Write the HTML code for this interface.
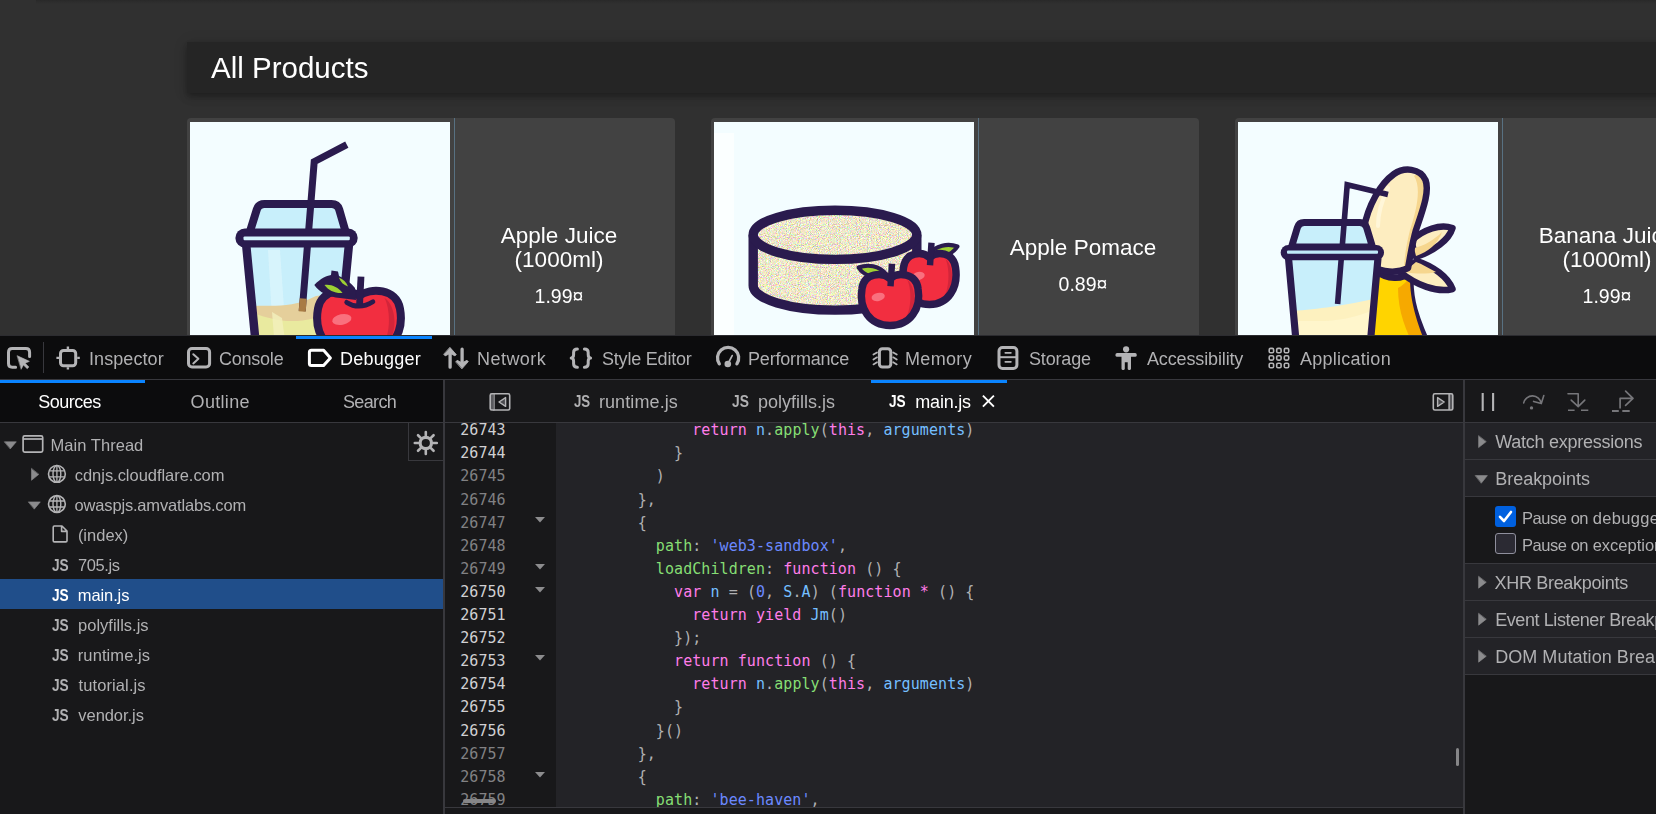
<!DOCTYPE html>
<html lang="en"><head><meta charset="utf-8"><title>OWASP Juice Shop</title>
<style>

html,body{margin:0;padding:0;overflow:hidden;background:#303030;}
body{width:1656px;height:814px;}
#root{position:relative;width:1656px;height:814px;overflow:hidden;background:#303030;font-family:"Liberation Sans", sans-serif;}
.a{position:absolute;}
.t{position:absolute;white-space:pre;line-height:1;}
svg{position:absolute;overflow:visible;}
.card{position:absolute;top:118px;width:488px;height:240px;background:#424242;border-radius:4px;}
.img{position:absolute;left:3px;top:4px;width:260px;height:230px;background:#f3fdff;overflow:hidden;}
.vl{position:absolute;left:267px;top:0;width:1px;height:240px;background:#587182;}
.mono{font-family:"DejaVu Sans Mono","Liberation Mono",monospace;}
.hl{position:absolute;height:1px;background:#38383d;}
.row{position:absolute;left:1465px;width:191px;height:36px;background:#232327;}

</style></head>
<body>
<div id="root">
<div class="a" style="left:36px;top:0;width:1620px;height:4px;background:linear-gradient(#292929,#2d2d2d 55%,#303030);"></div>
<div class="a" style="left:187px;top:42px;width:1500px;height:51px;background:#252525;box-shadow:0 3px 5px -1px rgba(0,0,0,.2),0 5px 8px rgba(0,0,0,.14),0 1px 14px rgba(0,0,0,.12);"></div>
<div class="card" style="left:187px;"><div class="img"><svg width="260" height="230" viewBox="0 0 260 230" style="left:0;top:0;"><defs><clipPath id="cupA"><path d="M56.2 125L66.5 230H148.6L158.9 125Z"/></clipPath></defs><path d="M56.2 125L66.5 230H148.6L158.9 125Z" fill="#c8effb"/><path d="M78 128L84 230H97L90 128Z" fill="#dbf5fd" opacity=".8"/><g clip-path="url(#cupA)"><path d="M50 186C75 180 95 190 126 174L170 168V240H50Z" fill="#e5cf9b"/><path d="M50 188C75 192 100 212 150 186V240H50Z" fill="#e9ea9f"/><path d="M82 190L86 240H98L92 196Z" fill="#f3f0bd" opacity=".8"/></g><path d="M59.5 111L66.8 87.5Q68.5 82 74.5 82H141.5Q147.5 82 149.2 87.5L156 111Z" fill="#c8effb" stroke="#2a1b4e" stroke-width="8" stroke-linejoin="round"/><path d="M156.8 22.6L124.2 39.6L112.2 189" fill="none" stroke="#2a1b4e" stroke-width="7" stroke-linejoin="miter"/><path d="M113.2 176.5L112.2 189.5" stroke="#a97b43" stroke-width="7"/><path d="M56.2 123L66.5 230M158.9 123L148.6 230" stroke="#2a1b4e" stroke-width="8.5"/><rect x="45.4" y="106.6" width="122.3" height="18.8" rx="9.4" fill="#2a1b4e"/><rect x="53.5" y="114.4" width="106.3" height="3.8" rx="1.2" fill="#d4f4fc"/><path d="M169 173.8C157.5 165.2 131.3 166.5 128.0 186.7C123.1 213.1 139.5 234.5 169 234.5C198.5 234.5 214.9 213.1 210.0 186.7C206.7 166.5 180.5 165.2 169 173.8Z" fill="#f22e40"/><path d="M194.4 175.8C207.9 185.0 210.0 218.0 187.4 231.9C201.8 216.3 201.0 188.3 194.4 175.8Z" fill="#d3253a"/><ellipse cx="151.8" cy="197.5" rx="9.8" ry="5.3" fill="#f9707e" transform="rotate(-12 151.8 197.5)"/><path d="M169 173.8C157.5 165.2 131.3 166.5 128.0 186.7C123.1 213.1 139.5 234.5 169 234.5C198.5 234.5 214.9 213.1 210.0 186.7C206.7 166.5 180.5 165.2 169 173.8Z" fill="none" stroke="#2a1b4e" stroke-width="8" stroke-linejoin="round"/><path d="M156.7 180.4Q169 188.3 182.9 179.7" fill="none" stroke="#2a1b4e" stroke-width="4.8" stroke-linecap="round"/><path d="M169.5 183.7L171.0 154.6" stroke="#2a1b4e" stroke-width="6.8"/><path d="M124.3 163C131 156 136 154 141 153L141.5 148.5L148 149.5L149 154C156 157 161 161 165 166L166 178L150 176C138 175 129 170 124.3 163Z" fill="#2a1b4e"/><path d="M134.5 163C141 162 148 165 152.5 171C145 171.5 138.5 168.5 134.5 163Z" fill="#9ed033"/><path d="M148.8 155.5C153 157 156.5 160 158 164.5C153.5 163 150.5 160 148.8 155.5Z" fill="#9ed033"/></svg></div><div class="vl"></div></div>
<div class="card" style="left:711px;"><div class="img"><svg width="260" height="230" viewBox="0 0 260 230" style="left:0;top:0;"><defs><filter id="nz" x="0" y="0" width="100%" height="100%" color-interpolation-filters="sRGB"><feTurbulence type="fractalNoise" baseFrequency="1.1" numOctaves="1" seed="3" result="n"/><feColorMatrix in="n" type="matrix" values="1.0 0 0 0 0.44  0 1.0 0 0 0.41  0 0 1.0 0 0.29  0 0 0 0 1"/><feComposite in2="SourceGraphic" operator="in"/></filter></defs><rect x="0" y="11" width="20" height="220" fill="#fbffff"/><path d="M39.2 112.8A81.8 24.6 0 0 1 202.8 112.8V163.5A81.8 24.6 0 0 1 39.2 163.5Z" fill="#ebe4c9"/><path d="M39.2 112.8A81.8 24.6 0 0 1 202.8 112.8V163.5A81.8 24.6 0 0 1 39.2 163.5Z" fill="#ebe4c9" filter="url(#nz)"/><path d="M39.2 112.8A81.8 24.6 0 0 1 202.8 112.8V163.5A81.8 24.6 0 0 1 39.2 163.5Z" fill="none" stroke="#2a1b4e" stroke-width="9.4" stroke-linejoin="round"/><path d="M39.2 112.8A81.8 24.6 0 0 0 202.8 112.8" fill="none" stroke="#2a1b4e" stroke-width="9.4"/><path d="M213.5 133C222 123 234 121 243.5 124.5C238 133 226 137.5 213.5 133Z" fill="#9ed033" stroke="#2a1b4e" stroke-width="4" stroke-linejoin="round"/><path d="M215.5 135.6C208.2 128.9 191.6 130.0 189.5 145.5C186.4 165.9 196.8 182.5 215.5 182.5C234.2 182.5 244.6 165.9 241.5 145.5C239.4 130.0 222.8 128.9 215.5 135.6Z" fill="#f22e40"/><path d="M231.6 137.1C240.2 144.2 241.5 169.8 227.2 180.5C236.3 168.5 235.8 146.8 231.6 137.1Z" fill="#d3253a"/><ellipse cx="204.6" cy="153.9" rx="6.2" ry="4.1" fill="#f9707e" transform="rotate(-12 204.6 153.9)"/><path d="M215.5 135.6C208.2 128.9 191.6 130.0 189.5 145.5C186.4 165.9 196.8 182.5 215.5 182.5C234.2 182.5 244.6 165.9 241.5 145.5C239.4 130.0 222.8 128.9 215.5 135.6Z" fill="none" stroke="#2a1b4e" stroke-width="7.5" stroke-linejoin="round"/><path d="M216.0 143.2L217.5 120.8" stroke="#2a1b4e" stroke-width="6.4"/><path d="M172 152C165 143.5 154 142 144.5 145.5C150 154 161 157.5 172 152Z" fill="#9ed033" stroke="#2a1b4e" stroke-width="4" stroke-linejoin="round"/><path d="M176 156.6C168.2 149.9 150.2 151.0 148.0 166.5C144.6 186.9 155.8 203.5 176 203.5C196.2 203.5 207.4 186.9 204.0 166.5C201.8 151.0 183.8 149.9 176 156.6Z" fill="#f22e40"/><path d="M193.4 158.1C202.6 165.2 204.0 190.8 188.6 201.5C198.4 189.5 197.8 167.8 193.4 158.1Z" fill="#d3253a"/><ellipse cx="164.2" cy="174.9" rx="6.7" ry="4.1" fill="#f9707e" transform="rotate(-12 164.2 174.9)"/><path d="M176 156.6C168.2 149.9 150.2 151.0 148.0 166.5C144.6 186.9 155.8 203.5 176 203.5C196.2 203.5 207.4 186.9 204.0 166.5C201.8 151.0 183.8 149.9 176 156.6Z" fill="none" stroke="#2a1b4e" stroke-width="7.5" stroke-linejoin="round"/><path d="M176.5 164.2L178.0 141.8" stroke="#2a1b4e" stroke-width="6.4"/></svg></div><div class="vl"></div></div>
<div class="card" style="left:1235px;"><div class="img"><svg width="260" height="230" viewBox="0 0 260 230" style="left:0;top:0;"><defs><clipPath id="cupB"><path d="M50.5 136L59 230H131.5L140 136Z"/></clipPath></defs><path d="M136 148C150 158 164 158 173 150C170 175 178 198 194 232H128Z" fill="#ffd400" stroke="#2a1b4e" stroke-width="6.5" stroke-linejoin="round"/><path d="M160 166C160 190 168 210 180 232H192C178 200 172 178 172 156C168 160 164 164 160 166Z" fill="#f6a900"/><path d="M173 119C186 107 202 102 214.5 106C211 118 196 129 178 135Z" fill="#fdedc0" stroke="#2a1b4e" stroke-width="6.5" stroke-linejoin="round"/><path d="M176 126C186 124 196 118 204 110C200 122 190 130 178 134Z" fill="#f6d68e"/><path d="M179 139C195 144 210 155 214.5 167C199 171 178 163 162 150Z" fill="#fdedc0" stroke="#2a1b4e" stroke-width="6.5" stroke-linejoin="round"/><path d="M166 150C178 152 190 152 198 150C190 146 184 142 178 140Z" fill="#f6d68e"/><path d="M126 106C130 84 142 62 156 52C166 45 182 46 187.5 58C192 70 184 90 178 108C174 122 172 136 170 146C158 152 144 150 134 144Z" fill="#fdedc0"/><path d="M176 54C184 66 178 90 172 108C168 124 166 138 166 148L170 146C172 136 174 122 178 108C184 90 192 70 187.5 58C185 53 181 51 176 54Z" fill="#f6d68e"/><path d="M150 66C144 78 140 92 140 104" stroke="#fff6d8" stroke-width="4" fill="none" stroke-linecap="round"/><path d="M126 106C130 84 142 62 156 52C166 45 182 46 187.5 58C192 70 184 90 178 108C174 122 172 136 170 146C158 152 144 150 134 144Z" fill="none" stroke="#2a1b4e" stroke-width="6.5" stroke-linejoin="round"/><path d="M50.5 136L59 230H131.5L140 136Z" fill="#c8effb"/><g clip-path="url(#cupB)"><path d="M40 190C70 188 95 186 135 177V240H40Z" fill="#fdf1bf"/><path d="M40 200C70 196 95 206 140 186V240H40Z" fill="#fff8d2" opacity=".7"/></g><path d="M53.5 125L59.4 105.5Q60.9 100.5 66.1 100.5H121.9Q127.1 100.5 128.6 105.5L134.5 125Z" fill="#c8effb" stroke="#2a1b4e" stroke-width="7" stroke-linejoin="round"/><path d="M150 72.5L109.2 62.8L99.6 182" fill="none" stroke="#2a1b4e" stroke-width="5.6"/><path d="M50.5 136L59 230M140 136L131.5 230" stroke="#2a1b4e" stroke-width="7.2"/><rect x="42.7" y="123" width="103.3" height="15.2" rx="7.6" fill="#2a1b4e"/><rect x="49" y="128.6" width="91" height="3.2" rx="1" fill="#bfeaf9"/></svg></div><div class="vl"></div></div>
<div class="a" id="dt" style="left:0;top:335px;width:1656px;height:479px;background:#18181a;"></div>
<div class="a" style="left:0;top:335px;width:1656px;height:1px;background:#2c2c30;"></div>
<div class="a" style="left:0;top:336px;width:1656px;height:43px;background:#0c0c0d;"></div>
<div class="hl" style="left:0;top:379px;width:1656px;"></div>
<div class="a" style="left:296px;top:336px;width:136px;height:3px;background:#0a84ff;"></div>
<div class="a" style="left:43px;top:342px;width:1px;height:31px;background:#38383d;"></div>
<div class="a" style="left:0;top:380px;width:443px;height:42px;background:#0c0c0d;"></div>
<div class="a" style="left:0;top:380px;width:145px;height:3px;background:#0a84ff;"></div>
<div class="hl" style="left:0;top:422px;width:1656px;"></div>
<div class="a" style="left:0;top:579px;width:443px;height:30px;background:#204e8a;"></div>
<div class="a" style="left:408px;top:423px;width:35px;height:38px;background:#18181a;border-left:1px solid #38383d;border-bottom:1px solid #38383d;box-sizing:border-box;"></div>
<div class="a" style="left:443px;top:380px;width:2px;height:434px;background:#38383d;"></div>
<div class="a" style="left:1463px;top:380px;width:2px;height:434px;background:#38383d;"></div>
<div class="a" style="left:556px;top:423px;width:907px;height:384px;background:#232327;"></div>
<div class="hl" style="left:445px;top:807px;width:1018px;"></div>
<div class="a" style="left:871px;top:380px;width:136px;height:3px;background:#0a84ff;"></div>
<div class="a mono" id="code" style="left:445px;top:423px;width:1018px;height:384px;overflow:hidden;font-size:15px;letter-spacing:0.070px;">
<span class="t" style="left:15.20px;top:0.41px;color:#d0d0d3;">26743</span>
<span class="t" style="left:247.25px;top:0.41px;color:#b1b1b3;"><span style="color:#ff7de9">return</span> <span style="color:#75bfff">n</span>.<span style="color:#86de74">apply</span>(<span style="color:#ff7de9">this</span>, <span style="color:#75bfff">arguments</span>)</span>
<span class="t" style="left:15.20px;top:22.54px;color:#d0d0d3;">26744</span>
<span class="t" style="left:229.05px;top:22.54px;color:#b1b1b3;">}</span>
<span class="t" style="left:15.20px;top:45.66px;color:#818184;">26745</span>
<span class="t" style="left:210.85px;top:45.66px;color:#b1b1b3;">)</span>
<span class="t" style="left:15.20px;top:69.79px;color:#818184;">26746</span>
<span class="t" style="left:192.65px;top:69.79px;color:#b1b1b3;">},</span>
<span class="t" style="left:15.20px;top:92.91px;color:#818184;">26747</span>
<span class="t" style="left:192.65px;top:92.91px;color:#b1b1b3;">{</span>
<svg style="left:90px;top:94.40px;" width="10" height="6" viewBox="0 0 10 6"><path d="M0 0h10l-5 5.6z" fill="#8c8c8e"/></svg>
<span class="t" style="left:15.20px;top:116.03px;color:#818184;">26748</span>
<span class="t" style="left:210.85px;top:116.03px;color:#b1b1b3;"><span style="color:#86de74">path</span>: <span style="color:#6b89ff">'web3-sandbox'</span>,</span>
<span class="t" style="left:15.20px;top:139.16px;color:#818184;">26749</span>
<span class="t" style="left:210.85px;top:139.16px;color:#b1b1b3;"><span style="color:#86de74">loadChildren</span>: <span style="color:#ff7de9">function</span> () {</span>
<svg style="left:90px;top:140.65px;" width="10" height="6" viewBox="0 0 10 6"><path d="M0 0h10l-5 5.6z" fill="#8c8c8e"/></svg>
<span class="t" style="left:15.20px;top:162.28px;color:#d0d0d3;">26750</span>
<span class="t" style="left:229.05px;top:162.28px;color:#b1b1b3;"><span style="color:#ff7de9">var</span> <span style="color:#75bfff">n</span> = (<span style="color:#6b89ff">0</span>, <span style="color:#75bfff">S</span>.<span style="color:#75bfff">A</span>) (<span style="color:#ff7de9">function</span> <span style="color:#ff7de9">*</span> () {</span>
<svg style="left:90px;top:163.77px;" width="10" height="6" viewBox="0 0 10 6"><path d="M0 0h10l-5 5.6z" fill="#8c8c8e"/></svg>
<span class="t" style="left:15.20px;top:185.41px;color:#d0d0d3;">26751</span>
<span class="t" style="left:247.25px;top:185.41px;color:#b1b1b3;"><span style="color:#ff7de9">return</span> <span style="color:#ff7de9">yield</span> <span style="color:#75bfff">Jm</span>()</span>
<span class="t" style="left:15.20px;top:207.53px;color:#d0d0d3;">26752</span>
<span class="t" style="left:229.05px;top:207.53px;color:#b1b1b3;">});</span>
<span class="t" style="left:15.20px;top:230.66px;color:#d0d0d3;">26753</span>
<span class="t" style="left:229.05px;top:230.66px;color:#b1b1b3;"><span style="color:#ff7de9">return</span> <span style="color:#ff7de9">function</span> () {</span>
<svg style="left:90px;top:232.15px;" width="10" height="6" viewBox="0 0 10 6"><path d="M0 0h10l-5 5.6z" fill="#8c8c8e"/></svg>
<span class="t" style="left:15.20px;top:253.78px;color:#d0d0d3;">26754</span>
<span class="t" style="left:247.25px;top:253.78px;color:#b1b1b3;"><span style="color:#ff7de9">return</span> <span style="color:#75bfff">n</span>.<span style="color:#86de74">apply</span>(<span style="color:#ff7de9">this</span>, <span style="color:#75bfff">arguments</span>)</span>
<span class="t" style="left:15.20px;top:276.91px;color:#d0d0d3;">26755</span>
<span class="t" style="left:229.05px;top:276.91px;color:#b1b1b3;">}</span>
<span class="t" style="left:15.20px;top:301.03px;color:#d0d0d3;">26756</span>
<span class="t" style="left:210.85px;top:301.03px;color:#b1b1b3;">}()</span>
<span class="t" style="left:15.20px;top:324.16px;color:#818184;">26757</span>
<span class="t" style="left:192.65px;top:324.16px;color:#b1b1b3;">},</span>
<span class="t" style="left:15.20px;top:347.28px;color:#818184;">26758</span>
<span class="t" style="left:192.65px;top:347.28px;color:#b1b1b3;">{</span>
<svg style="left:90px;top:348.77px;" width="10" height="6" viewBox="0 0 10 6"><path d="M0 0h10l-5 5.6z" fill="#8c8c8e"/></svg>
<span class="t" style="left:15.20px;top:370.41px;color:#818184;">26759</span>
<span class="t" style="left:210.85px;top:370.41px;color:#b1b1b3;"><span style="color:#86de74">path</span>: <span style="color:#6b89ff">'bee-haven'</span>,</span>
</div>
<div class="a" style="left:463px;top:799px;width:33px;height:4px;border-radius:2px;background:#868688;"></div>
<div class="a" style="left:1456px;top:748px;width:3px;height:18px;border-radius:1.5px;background:#868688;"></div>
<div class="row" style="top:423px;"></div>
<div class="row" style="top:460px;"></div>
<div class="row" style="top:564px;"></div>
<div class="row" style="top:601px;"></div>
<div class="row" style="top:638px;"></div>
<div class="hl" style="left:1465px;top:459px;width:191px;"></div>
<div class="hl" style="left:1465px;top:496px;width:191px;"></div>
<div class="hl" style="left:1465px;top:563px;width:191px;"></div>
<div class="hl" style="left:1465px;top:600px;width:191px;"></div>
<div class="hl" style="left:1465px;top:637px;width:191px;"></div>
<div class="hl" style="left:1465px;top:674px;width:191px;"></div>
<div class="a" style="left:1495px;top:506px;width:21px;height:21px;border-radius:3px;background:#0060df;"></div>
<svg style="left:1495px;top:506px;" width="21" height="21" viewBox="0 0 21 21"><path d="M5 10.8l4 4.2 7-9" fill="none" stroke="#fff" stroke-width="2.6" stroke-linecap="round" stroke-linejoin="round"/></svg>
<div class="a" style="left:1495px;top:533px;width:21px;height:21px;border-radius:3px;background:#2b2a33;border:1px solid #8f8f9d;box-sizing:border-box;"></div>
<div class="t" id="allp" style="will-change:transform;left:211px;top:53.23px;font-size:29.5px;color:#fff;">All Products</div>
<div class="t" style="will-change:transform;left:409px;width:300px;text-align:center;top:224.95px;font-size:22.5px;color:#fff;">Apple Juice</div><div class="t" style="will-change:transform;left:409px;width:300px;text-align:center;top:249.25px;font-size:22.5px;color:#fff;">(1000ml)</div><div class="t" style="will-change:transform;left:409px;width:300px;text-align:center;top:287.39px;font-size:19.5px;color:#fff;">1.99&curren;</div>
<div class="t" style="will-change:transform;left:933px;width:300px;text-align:center;top:237.05px;font-size:22.5px;color:#fff;">Apple Pomace</div><div class="t" style="will-change:transform;left:933px;width:300px;text-align:center;top:275.29px;font-size:19.5px;color:#fff;">0.89&curren;</div>
<div class="t" style="will-change:transform;left:1457px;width:300px;text-align:center;top:224.95px;font-size:22.5px;color:#fff;">Banana Juice</div><div class="t" style="will-change:transform;left:1457px;width:300px;text-align:center;top:249.25px;font-size:22.5px;color:#fff;">(1000ml)</div><div class="t" style="will-change:transform;left:1457px;width:300px;text-align:center;top:287.39px;font-size:19.5px;color:#fff;">1.99&curren;</div>
<svg style="left:0;top:0;" width="1656" height="814" viewBox="0 0 1656 814" fill="none" stroke-linecap="round" stroke-linejoin="round">
<path d="M15.6 367.3H12.2Q8.5 367.3 8.5 363.6V352.2Q8.5 348.5 12.2 348.5H25.9Q29.6 348.5 29.6 352.2V356.6" stroke="#b4b4b6" stroke-width="3"/>
<path d="M17.4 355.8L29.4 361.3L25.2 363.3L28.9 367L27.2 368.7L23.4 365L21.3 369Z" fill="#b4b4b6" stroke="#b4b4b6" stroke-width="0.6"/>
<rect x="60.5" y="350.5" width="15.2" height="15.2" rx="3" stroke="#b4b4b6" stroke-width="3"/>
<path d="M67.9 346.6V349M67.9 367.2V369.4M56.4 357.9H59M77.2 357.9H79.8" stroke="#b4b4b6" stroke-width="2.4" stroke-linecap="butt"/>
<rect x="188.5" y="348.5" width="21.1" height="18.5" rx="3.5" stroke="#b4b4b6" stroke-width="3"/>
<path d="M193.3 354.2L198.4 358.8L193.3 363.4" stroke="#b4b4b6" stroke-width="2"/>
<path d="M311.4 350.2H323.6L330.4 357.9L323.6 365.6H311.4Q309.4 365.6 309.4 363.6V352.2Q309.4 350.2 311.4 350.2Z" stroke="#fff" stroke-width="3"/>
<path d="M450.1 351V367.2M462.1 349.2V364" stroke="#b4b4b6" stroke-width="3.3"/>
<path d="M450.1 347.6L456.3 354.6L455 355.9L450.1 353.4L445.2 355.9L443.9 354.6Z" fill="#b4b4b6" stroke="#b4b4b6" stroke-width="0.8"/>
<path d="M462.1 368.6L468.3 361.6L467 360.3L462.1 362.8L457.2 360.3L455.9 361.6Z" fill="#b4b4b6" stroke="#b4b4b6" stroke-width="0.8"/>
<path d="M577.4 348.9Q573.6 348.9 573.6 352.4V354.6Q573.6 357.9 571.2 357.9Q573.6 357.9 573.6 361.2V363.8Q573.6 367.3 577.4 367.3" stroke="#b4b4b6" stroke-width="3"/>
<path d="M584.4 348.9Q588.2 348.9 588.2 352.4V354.6Q588.2 357.9 590.6 357.9Q588.2 357.9 588.2 361.2V363.8Q588.2 367.3 584.4 367.3" stroke="#b4b4b6" stroke-width="3"/>
<path d="M719.31 363.83A10.6 10.6 0 1 1 736.89 363.83" stroke="#b4b4b6" stroke-width="3.3"/>
<circle cx="727.8" cy="364" r="3.3" fill="#b4b4b6"/><path d="M727.8 364L732.2 355.6" stroke="#b4b4b6" stroke-width="1.7"/>
<rect x="879.4" y="348.8" width="11.4" height="18.2" rx="3" stroke="#b4b4b6" stroke-width="3"/>
<path d="M877 352.4L873.4 354.6M893.2 352.4L896.8 354.6" stroke="#b4b4b6" stroke-width="1.7"/>
<path d="M877 357.3L873.4 359.5M893.2 357.3L896.8 359.5" stroke="#b4b4b6" stroke-width="1.7"/>
<path d="M877 362.2L873.4 364.4M893.2 362.2L896.8 364.4" stroke="#b4b4b6" stroke-width="1.7"/>
<rect x="999" y="347.5" width="17.9" height="20.9" rx="3.5" stroke="#b4b4b6" stroke-width="3"/>
<path d="M999 357.2H1016.9" stroke="#b4b4b6" stroke-width="2" stroke-linecap="butt"/><path d="M1005.3 352.8H1010.9M1005.3 361.8H1010.9" stroke="#b4b4b6" stroke-width="1.7"/>
<circle cx="1126.1" cy="349.3" r="3.1" fill="#b4b4b6"/>
<rect x="1115.5" y="353" width="21.2" height="3.8" rx="1.6" fill="#b4b4b6"/>
<path d="M1121.5 354.5H1131V368.8Q1131 369.9 1129.9 369.9H1128.8Q1127.7 369.9 1127.7 368.8V362.3H1124.8V368.8Q1124.8 369.9 1123.7 369.9H1122.6Q1121.5 369.9 1121.5 368.8Z" fill="#b4b4b6"/>
<rect x="1269.2" y="348.4" width="4.4" height="4.4" rx="1.3" stroke="#b4b4b6" stroke-width="1.6"/>
<rect x="1269.2" y="355.7" width="4.4" height="4.4" rx="1.3" stroke="#b4b4b6" stroke-width="1.6"/>
<rect x="1269.2" y="363.3" width="4.4" height="4.4" rx="1.3" stroke="#b4b4b6" stroke-width="1.6"/>
<rect x="1276.7" y="348.4" width="4.4" height="4.4" rx="1.3" stroke="#b4b4b6" stroke-width="1.6"/>
<rect x="1276.7" y="355.7" width="4.4" height="4.4" rx="1.3" stroke="#b4b4b6" stroke-width="1.6"/>
<rect x="1276.7" y="363.3" width="4.4" height="4.4" rx="1.3" stroke="#b4b4b6" stroke-width="1.6"/>
<rect x="1284.3" y="348.4" width="4.4" height="4.4" rx="1.3" stroke="#b4b4b6" stroke-width="1.6"/>
<rect x="1284.3" y="355.7" width="4.4" height="4.4" rx="1.3" stroke="#b4b4b6" stroke-width="1.6"/>
<rect x="1284.3" y="363.3" width="4.4" height="4.4" rx="1.3" stroke="#b4b4b6" stroke-width="1.6"/>
<path d="M4.6 441.8H16.3L10.45 448.7Z" fill="#8b8b8d" stroke="#8b8b8d" stroke-width="0.6"/>
<rect x="23.1" y="435.9" width="19.6" height="16.3" rx="1.6" stroke="#b4b4b6" stroke-width="1.7"/><path d="M23.1 439H42.7" stroke="#b4b4b6" stroke-width="1.7" stroke-linecap="butt"/>
<path d="M31.5 468.7V480.3L38.6 474.5Z" fill="#8b8b8d" stroke="#8b8b8d" stroke-width="0.6"/>
<path d="M28.6 501.9H40.3L34.45 508.9Z" fill="#8b8b8d" stroke="#8b8b8d" stroke-width="0.6"/>
<circle cx="56.9" cy="473.9" r="8.4" stroke="#b4b4b6" stroke-width="1.6"/><ellipse cx="56.9" cy="473.9" rx="3.9" ry="8.4" stroke="#b4b4b6" stroke-width="1.4"/><path d="M56.9 465.5V482.29999999999995M49.1 470.9H64.7M49.1 476.9H64.7" stroke="#b4b4b6" stroke-width="1.3" stroke-linecap="butt"/>
<circle cx="56.9" cy="504.0" r="8.4" stroke="#b4b4b6" stroke-width="1.6"/><ellipse cx="56.9" cy="504.0" rx="3.9" ry="8.4" stroke="#b4b4b6" stroke-width="1.4"/><path d="M56.9 495.6V512.4M49.1 501.0H64.7M49.1 507.0H64.7" stroke="#b4b4b6" stroke-width="1.3" stroke-linecap="butt"/>
<path d="M53.2 527.2Q53.2 526 54.4 526H62L67 531V540.7Q67 541.9 65.8 541.9H54.4Q53.2 541.9 53.2 540.7ZM61.6 526.2V531.4H66.8" stroke="#b4b4b6" stroke-width="1.6"/>
<circle cx="425.8" cy="443.0" r="5.7" stroke="#b4b4b6" stroke-width="3.2"/>
<path d="M433.00 443.00L436.80 443.00M430.89 448.09L433.58 450.78M425.80 450.20L425.80 454.00M420.71 448.09L418.02 450.78M418.60 443.00L414.80 443.00M420.71 437.91L418.02 435.22M425.80 435.80L425.80 432.00M430.89 437.91L433.58 435.22" stroke="#b4b4b6" stroke-width="2.6"/>
<rect x="493.8" y="393.8" width="0.1" height="16.2" stroke="#b4b4b6" stroke-width="1.5"/><rect x="490.2" y="393.8" width="3.6" height="16.2" fill="#5a5a5e"/>
<rect x="490.2" y="393.8" width="19.5" height="16.2" rx="1.6" stroke="#b4b4b6" stroke-width="1.6"/>
<path d="M505.6 397.6V406.4L499 402Z" stroke="#b4b4b6" stroke-width="1.4" fill="#4a4a4e"/>
<rect x="1449.2" y="393.8" width="3.6" height="16.2" fill="#5a5a5e"/><path d="M1449.1 393.8V410" stroke="#b4b4b6" stroke-width="1.5" stroke-linecap="butt"/>
<rect x="1433.3" y="393.8" width="19.5" height="16.2" rx="1.6" stroke="#b4b4b6" stroke-width="1.6"/>
<path d="M1437.6 397.6V406.4L1444.2 402Z" stroke="#b4b4b6" stroke-width="1.4" fill="#4a4a4e"/>
<path d="M982.9 395.6L993.9 406.6M993.9 395.6L982.9 406.6" stroke="#fff" stroke-width="1.9" stroke-linecap="butt"/>
<path d="M1482.7 393V411M1493.1 393V411" stroke="#b4b4b6" stroke-width="2.1" stroke-linecap="butt"/>
<path d="M1523.7 402.9A8.9 8.9 0 0 1 1541.2 403.4M1543.8 395.6L1541.3 403.6L1533.6 401.4" stroke="#76767a" stroke-width="1.6"/><circle cx="1531.5" cy="407.9" r="1.7" fill="#76767a"/>
<path d="M1568 393.7H1578.2V406.4M1571.2 400.1L1578.2 406.6L1584.8 400.1" stroke="#76767a" stroke-width="1.6"/><path d="M1568 410.2H1574.6M1581 410.2H1588.3" stroke="#76767a" stroke-width="1.6" stroke-linecap="butt"/>
<path d="M1620.1 407.8V398.4H1632.8M1625.6 391.2L1633 398.4L1625.6 405.4" stroke="#76767a" stroke-width="1.7"/><path d="M1612 410.9H1618.8M1622.3 410.9H1629.7" stroke="#76767a" stroke-width="2" stroke-linecap="butt"/>
<path d="M1478.6 436.0V447.6L1486 441.8Z" fill="#8b8b8d" stroke="#8b8b8d" stroke-width="0.6"/>
<path d="M1478.6 576.6V588.2L1486 582.4Z" fill="#8b8b8d" stroke="#8b8b8d" stroke-width="0.6"/>
<path d="M1478.6 613.6V625.2L1486 619.4Z" fill="#8b8b8d" stroke="#8b8b8d" stroke-width="0.6"/>
<path d="M1478.6 650.6V662.2L1486 656.4Z" fill="#8b8b8d" stroke="#8b8b8d" stroke-width="0.6"/>
<path d="M1475.5 475.6H1487.4L1481.45 483Z" fill="#8b8b8d" stroke="#8b8b8d" stroke-width="0.6"/>
</svg>
<span class="t" id="tb1" style="left:88.86px;top:349.96px;font-size:18px;color:#b1b1b3;letter-spacing:0.080px;will-change:transform;">Inspector</span>
<span class="t" id="tb2" style="left:219.10px;top:349.96px;font-size:18px;color:#b1b1b3;letter-spacing:-0.234px;will-change:transform;">Console</span>
<span class="t" id="tb3" style="left:339.80px;top:349.96px;font-size:18px;color:#ffffff;letter-spacing:0.246px;will-change:transform;">Debugger</span>
<span class="t" id="tb4" style="left:476.83px;top:349.96px;font-size:18px;color:#b1b1b3;letter-spacing:0.462px;will-change:transform;">Network</span>
<span class="t" id="tb5" style="left:601.54px;top:349.96px;font-size:18px;color:#b1b1b3;letter-spacing:-0.204px;will-change:transform;">Style Editor</span>
<span class="t" id="tb6" style="left:747.76px;top:349.96px;font-size:18px;color:#b1b1b3;letter-spacing:-0.186px;will-change:transform;">Performance</span>
<span class="t" id="tb7" style="left:905.17px;top:349.96px;font-size:18px;color:#b1b1b3;letter-spacing:0.336px;will-change:transform;">Memory</span>
<span class="t" id="tb8" style="left:1028.56px;top:349.96px;font-size:18px;color:#b1b1b3;letter-spacing:-0.172px;will-change:transform;">Storage</span>
<span class="t" id="tb9" style="left:1146.86px;top:349.96px;font-size:18px;color:#b1b1b3;letter-spacing:-0.138px;will-change:transform;">Accessibility</span>
<span class="t" id="tb10" style="left:1299.89px;top:349.96px;font-size:18px;color:#b1b1b3;letter-spacing:0.258px;will-change:transform;">Application</span>
<span class="t" id="st1" style="left:38.35px;top:392.76px;font-size:18px;color:#ffffff;letter-spacing:-0.501px;">Sources</span>
<span class="t" id="st2" style="left:190.55px;top:392.76px;font-size:18px;color:#b1b1b3;letter-spacing:0.329px;">Outline</span>
<span class="t" id="st3" style="left:342.90px;top:392.76px;font-size:18px;color:#b1b1b3;letter-spacing:-0.623px;">Search</span>
<span class="t" id="tr1" style="left:50.58px;top:436.73px;font-size:16.5px;color:#b1b1b3;letter-spacing:0.036px;">Main Thread</span>
<span class="t" id="tr2" style="left:74.78px;top:466.73px;font-size:16.5px;color:#b1b1b3;letter-spacing:-0.035px;">cdnjs.cloudflare.com</span>
<span class="t" id="tr3" style="left:74.60px;top:496.73px;font-size:16.5px;color:#b1b1b3;letter-spacing:-0.179px;">owaspjs.amvatlabs.com</span>
<span class="t" id="tr4" style="left:77.88px;top:526.73px;font-size:16.5px;color:#b1b1b3;letter-spacing:0.003px;">(index)</span>
<span class="t" id="tr5" style="left:78.02px;top:556.73px;font-size:16.5px;color:#b1b1b3;letter-spacing:-0.421px;">705.js</span>
<span class="t" id="tr6" style="left:77.83px;top:586.73px;font-size:16.5px;color:#ffffff;letter-spacing:-0.114px;">main.js</span>
<span class="t" id="tr7" style="left:78.09px;top:616.73px;font-size:16.5px;color:#b1b1b3;letter-spacing:-0.007px;">polyfills.js</span>
<span class="t" id="tr8" style="left:77.80px;top:646.73px;font-size:16.5px;color:#b1b1b3;letter-spacing:0.081px;">runtime.js</span>
<span class="t" id="tr9" style="left:78.51px;top:676.73px;font-size:16.5px;color:#b1b1b3;letter-spacing:0.109px;">tutorial.js</span>
<span class="t" id="tr10" style="left:78.34px;top:706.73px;font-size:16.5px;color:#b1b1b3;letter-spacing:-0.061px;">vendor.js</span>
<span class="t" id="js0" style="left:52.00px;top:556.53px;font-size:16.5px;color:#b1b1b3;display:inline-block;transform-origin:0 0;transform:scaleX(0.8299);font-weight:bold;">JS</span>
<span class="t" id="js1" style="left:52.00px;top:586.53px;font-size:16.5px;color:#ffffff;display:inline-block;transform-origin:0 0;transform:scaleX(0.8299);font-weight:bold;">JS</span>
<span class="t" id="js2" style="left:52.00px;top:616.53px;font-size:16.5px;color:#b1b1b3;display:inline-block;transform-origin:0 0;transform:scaleX(0.8299);font-weight:bold;">JS</span>
<span class="t" id="js3" style="left:52.00px;top:646.53px;font-size:16.5px;color:#b1b1b3;display:inline-block;transform-origin:0 0;transform:scaleX(0.8299);font-weight:bold;">JS</span>
<span class="t" id="js4" style="left:52.00px;top:676.53px;font-size:16.5px;color:#b1b1b3;display:inline-block;transform-origin:0 0;transform:scaleX(0.8299);font-weight:bold;">JS</span>
<span class="t" id="js5" style="left:52.00px;top:706.53px;font-size:16.5px;color:#b1b1b3;display:inline-block;transform-origin:0 0;transform:scaleX(0.8299);font-weight:bold;">JS</span>
<span class="t" id="ejs1" style="left:574.37px;top:392.63px;font-size:16.5px;color:#b1b1b3;display:inline-block;transform-origin:0 0;transform:scaleX(0.8028);font-weight:bold;">JS</span>
<span class="t" id="et1" style="left:598.89px;top:392.76px;font-size:18px;color:#b1b1b3;letter-spacing:0.108px;">runtime.js</span>
<span class="t" id="ejs2" style="left:732.26px;top:392.63px;font-size:16.5px;color:#b1b1b3;display:inline-block;transform-origin:0 0;transform:scaleX(0.8358);font-weight:bold;">JS</span>
<span class="t" id="et2" style="left:758.08px;top:392.76px;font-size:18px;color:#b1b1b3;letter-spacing:-0.002px;">polyfills.js</span>
<span class="t" id="ejs3" style="left:889.20px;top:392.63px;font-size:16.5px;color:#ffffff;display:inline-block;transform-origin:0 0;transform:scaleX(0.8269);font-weight:bold;">JS</span>
<span class="t" id="et3" style="left:915.30px;top:392.76px;font-size:18px;color:#ffffff;letter-spacing:-0.200px;">main.js</span>
<span class="t" id="rp1" style="left:1495.16px;top:432.76px;font-size:18px;color:#b1b1b3;letter-spacing:-0.246px;">Watch expressions</span>
<span class="t" id="rp2" style="left:1495.27px;top:469.96px;font-size:18px;color:#b1b1b3;letter-spacing:-0.037px;">Breakpoints</span>
<span class="t" id="rp3" style="left:1522.05px;top:509.53px;font-size:16.5px;color:#b1b1b3;letter-spacing:-0.460px;">Pause on</span>
<span class="t" id="rp3b" style="left:1592.63px;top:509.53px;font-size:16.5px;color:#b1b1b3;letter-spacing:0.347px;">debugger statement</span>
<span class="t" id="rp4" style="left:1522.05px;top:536.53px;font-size:16.5px;color:#b1b1b3;letter-spacing:-0.460px;">Pause on</span>
<span class="t" id="rp4b" style="left:1592.63px;top:536.53px;font-size:16.5px;color:#b1b1b3;letter-spacing:-0.003px;">exceptions</span>
<span class="t" id="rp5" style="left:1494.55px;top:573.96px;font-size:18px;color:#b1b1b3;letter-spacing:-0.319px;">XHR Breakpoints</span>
<span class="t" id="rp6" style="left:1495.13px;top:610.96px;font-size:18px;color:#b1b1b3;letter-spacing:-0.403px;">Event Listener Breakpoints</span>
<span class="t" id="rp7" style="left:1495.13px;top:647.96px;font-size:18px;color:#b1b1b3;letter-spacing:0.054px;">DOM Mutation Breakpoints</span>
</div>
</body></html>
